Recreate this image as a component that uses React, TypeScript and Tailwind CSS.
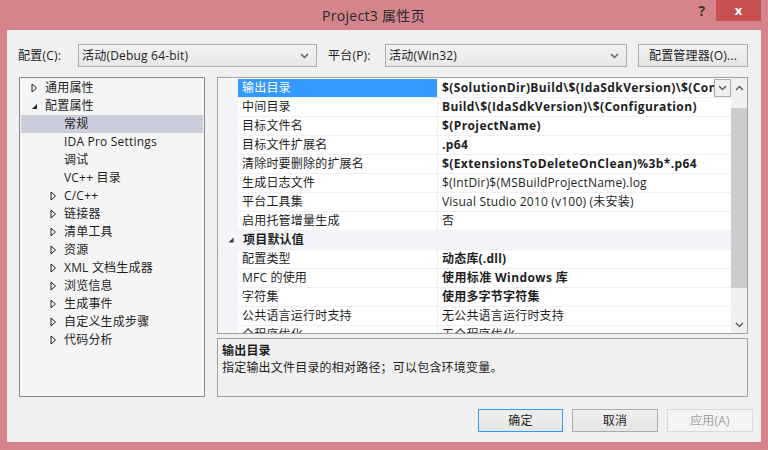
import React from 'react';

type TreeItem = { label: string; level: 0 | 1; arrow?: 'collapsed' | 'expanded'; selected?: boolean };

const treeItems: TreeItem[] = [
  { label: '通用属性', level: 0, arrow: 'collapsed' },
  { label: '配置属性', level: 0, arrow: 'expanded' },
  { label: '常规', level: 1, selected: true },
  { label: 'IDA Pro Settings', level: 1 },
  { label: '调试', level: 1 },
  { label: 'VC++ 目录', level: 1 },
  { label: 'C/C++', level: 1, arrow: 'collapsed' },
  { label: '链接器', level: 1, arrow: 'collapsed' },
  { label: '清单工具', level: 1, arrow: 'collapsed' },
  { label: '资源', level: 1, arrow: 'collapsed' },
  { label: 'XML 文档生成器', level: 1, arrow: 'collapsed' },
  { label: '浏览信息', level: 1, arrow: 'collapsed' },
  { label: '生成事件', level: 1, arrow: 'collapsed' },
  { label: '自定义生成步骤', level: 1, arrow: 'collapsed' },
  { label: '代码分析', level: 1, arrow: 'collapsed' },
];

type Row =
  | { kind: 'prop'; name: string; value: string; bold?: boolean; latin?: boolean; selected?: boolean }
  | { kind: 'category'; name: string };

const rows: Row[] = [
  { kind: 'prop', name: '输出目录', value: '$(SolutionDir)Build\\$(IdaSdkVersion)\\$(Configuration)\\', bold: true, latin: true, selected: true },
  { kind: 'prop', name: '中间目录', value: 'Build\\$(IdaSdkVersion)\\$(Configuration)', bold: true, latin: true },
  { kind: 'prop', name: '目标文件名', value: '$(ProjectName)', bold: true, latin: true },
  { kind: 'prop', name: '目标文件扩展名', value: '.p64', bold: true, latin: true },
  { kind: 'prop', name: '清除时要删除的扩展名', value: '$(ExtensionsToDeleteOnClean)%3b*.p64', bold: true, latin: true },
  { kind: 'prop', name: '生成日志文件', value: '$(IntDir)$(MSBuildProjectName).log' },
  { kind: 'prop', name: '平台工具集', value: 'Visual Studio 2010 (v100) (未安装)' },
  { kind: 'prop', name: '启用托管增量生成', value: '否' },
  { kind: 'category', name: '项目默认值' },
  { kind: 'prop', name: '配置类型', value: '动态库(.dll)', bold: true },
  { kind: 'prop', name: 'MFC 的使用', value: '使用标准 Windows 库', bold: true, latin: true },
  { kind: 'prop', name: '字符集', value: '使用多字节字符集', bold: true },
  { kind: 'prop', name: '公共语言运行时支持', value: '无公共语言运行时支持' },
  { kind: 'prop', name: '全程序优化', value: '无全程序优化' },
];

function Chevron({ up = false }: { up?: boolean }) {
  return (
    <svg width="9" height="6" viewBox="0 0 9 6" className="shrink-0">
      <path d={up ? 'M1 5 L4.5 1.5 L8 5' : 'M1 1 L4.5 4.5 L8 1'} fill="none" stroke="#606060" strokeWidth="1.5" />
    </svg>
  );
}

function Collapsed() {
  return (
    <svg width="7" height="10" viewBox="0 0 7 10">
      <path d="M1 1 L5.5 5 L1 9 Z" fill="none" stroke="#1e1e1e" strokeWidth="1" />
    </svg>
  );
}

function Expanded() {
  return (
    <svg width="7" height="10" viewBox="0 0 7 10">
      <path d="M6 3 L6 8 L1 8 Z" fill="#262626" />
    </svg>
  );
}

function Combo({ text, width }: { text: string; width: string }) {
  return (
    <div className={`${width} h-[23px] flex items-center justify-between border border-[#acacac] bg-gradient-to-b from-[#f2f2f2] to-[#e8e8e8] pl-[3px] pr-[7px]`}>
      <span>{text}</span>
      <Chevron />
    </div>
  );
}

export default function App() {
  return (
    <div className="w-[768px] h-[450px] bg-[#d4848a] flex flex-col font-[family-name:Open_Sans,Noto_Sans_CJK_SC,sans-serif] text-[12px] tracking-[0.2px] text-[#1e1e1e] overflow-hidden">
      {/* Title bar */}
      <div className="h-[30px] flex items-start shrink-0">
        <div className="flex-1 h-[30px] flex items-center justify-center pl-[52px] text-[14px] tracking-[0.3px] text-[#2b2b2b]">Project3 属性页</div>
        <div className="w-[14px] h-[21px] flex items-center justify-center text-[14px] font-bold text-[#333] mr-[7px]">?</div>
        <div className="w-[45px] h-[21px] bg-[#c75050] flex items-center justify-center text-white text-[13px] font-bold mr-[7px]">x</div>
      </div>

      {/* Client area */}
      <div className="mx-[7px] mb-[8px] flex-1 bg-[#f0f0f0] flex flex-col">
        {/* Configuration row */}
        <div className="flex items-center h-[23px] mt-[14px] pl-[11px]">
          <span className="w-[60px]">配置(C):</span>
          <Combo text="活动(Debug 64-bit)" width="w-[239px]" />
          <span className="ml-[11px] w-[57px]">平台(P):</span>
          <Combo text="活动(Win32)" width="w-[242px]" />
          <div className="ml-[11px] w-[110px] h-[23px] border border-[#acacac] bg-gradient-to-b from-[#f2f2f2] to-[#e5e5e5] flex items-center justify-center">配置管理器(O)...</div>
        </div>

        {/* Main panels */}
        <div className="flex mt-[10px] h-[320px] pl-[12px]">
          {/* Tree */}
          <div className="w-[186px] h-full border border-[#828790] bg-[#f5f5f5] pt-[1px]">
            {treeItems.map((item) => (
              <div
                key={item.label}
                className={`h-[18px] flex items-center mx-[1px] ${item.selected ? 'bg-[#cccedb]' : ''}`}
              >
                <div className={`${item.level === 0 ? 'w-[24px] pl-[10px]' : 'w-[43px] pl-[29px]'} flex items-center`}>
                  {item.arrow === 'collapsed' && <Collapsed />}
                  {item.arrow === 'expanded' && <Expanded />}
                </div>
                <span>{item.label}</span>
              </div>
            ))}
          </div>

          {/* Right side */}
          <div className="ml-[12px] w-[531px] flex flex-col">
            {/* Property grid */}
            <div className="h-[257px] border border-[#a0a0a0] bg-white flex overflow-hidden">
              <div className="flex-1 flex flex-col pt-[1px] overflow-hidden">
                {rows.map((row) =>
                  row.kind === 'category' ? (
                    <div key={row.name} className="h-[19px] shrink-0 flex items-center bg-[#f3f5f8] border-b border-[#f0f0f0]">
                      <div className="w-[20px] flex justify-end pr-[4px]">
                        <svg width="6" height="6" viewBox="0 0 6 6">
                          <path d="M5.5 0.5 L5.5 5.5 L0.5 5.5 Z" fill="#333" />
                        </svg>
                      </div>
                      <span className="pl-[5px] font-bold">{row.name}</span>
                    </div>
                  ) : (
                    <div key={row.name} className="h-[19px] shrink-0 flex">
                      <div className="w-[20px] bg-[#f3f5f8]" />
                      <div
                        className={`w-[200px] shrink-0 border-b border-r border-[#f0f0f0] pl-[4px] flex items-center ${row.selected ? 'bg-[#3399ff] text-white' : ''}`}
                      >
                        {row.name}
                      </div>
                      <div className="flex-1 min-w-0 border-b border-[#f0f0f0] pl-[4px] flex items-center overflow-hidden">
                        <span
                          className={`whitespace-nowrap overflow-hidden flex-1 ${row.bold ? 'font-bold' : ''} ${row.bold && row.latin ? 'tracking-[0.4px]' : ''}`}
                        >
                          {row.value}
                        </span>
                        {row.selected && (
                          <div className="w-[17px] h-[18px] shrink-0 border border-[#acacac] bg-[#f0f0f0] flex items-center justify-center">
                            <Chevron />
                          </div>
                        )}
                      </div>
                    </div>
                  )
                )}
              </div>
              {/* Scrollbar */}
              <div className="w-[16px] bg-[#f0f0f0] flex flex-col items-center">
                <div className="h-[20px] flex items-center justify-center">
                  <Chevron up />
                </div>
                <div className="mt-[10px] w-full h-[180px] bg-[#cdcdcd]" />
                <div className="flex-1" />
                <div className="h-[17px] flex items-center justify-center">
                  <Chevron />
                </div>
              </div>
            </div>

            {/* Description */}
            <div className="mt-[4px] h-[59px] border border-[#a0a0a0] bg-[#f0f0f0] px-[4px] pt-[3px] leading-[17px]">
              <div className="font-bold">输出目录</div>
              <div>指定输出文件目录的相对路径；可以包含环境变量。</div>
            </div>
          </div>
        </div>

        {/* Buttons */}
        <div className="flex justify-end gap-[9px] mt-[12px] pr-[8px]">
          <div className="w-[85px] h-[23px] border border-[#3399ff] bg-gradient-to-b from-[#f0f0f0] to-[#e5e5e5] flex items-center justify-center">确定</div>
          <div className="w-[86px] h-[23px] border border-[#acacac] bg-gradient-to-b from-[#f0f0f0] to-[#e5e5e5] flex items-center justify-center">取消</div>
          <div className="w-[86px] h-[23px] border border-[#d9d9d9] bg-[#f4f4f4] text-[#a0a0a0] flex items-center justify-center">应用(A)</div>
        </div>
      </div>
    </div>
  );
}
